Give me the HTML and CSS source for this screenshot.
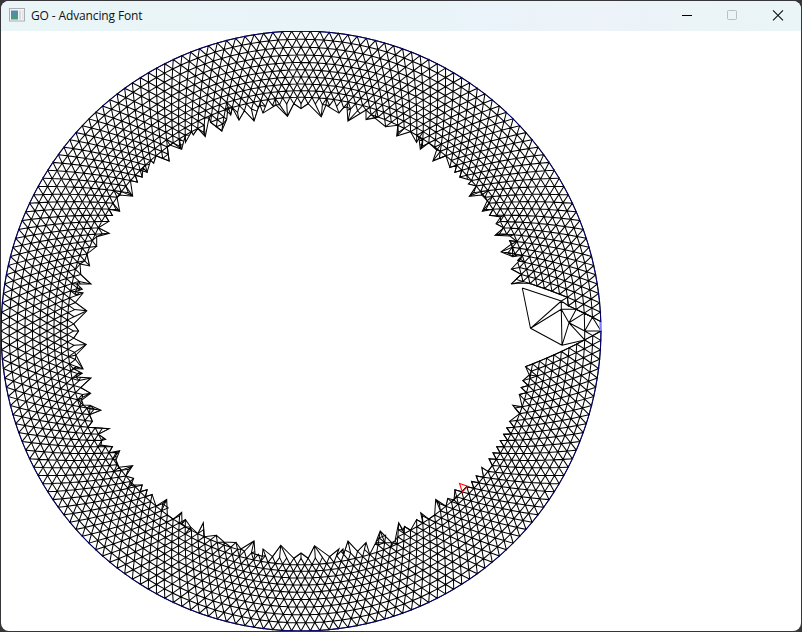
FILE: index.html
```
<!DOCTYPE html>
<html lang="en">
<head>
<meta charset="utf-8">
<title>GO - Advancing Font</title>
<link rel="stylesheet" href="styles.css">
</head>
<body>
<div class="window">
  <header class="titlebar">
    <svg class="app-icon" width="16" height="14" viewBox="0 0 16 14">
      <defs><linearGradient id="pane" x1="0" y1="0" x2="0" y2="1"><stop offset="0" stop-color="#5689b5"/><stop offset="1" stop-color="#4b9a7c"/></linearGradient></defs>
      <rect x=".5" y=".5" width="15" height="12.5" fill="#f3f5f6" stroke="#a9afb3"/>
      <rect x="2" y="2.5" width="7" height="9" fill="url(#pane)"/>
      <rect x="10" y="2.5" width="2" height="9" fill="#d5dadd"/>
      <rect x="13" y="2.5" width="1.5" height="9" fill="#dfe3e6"/>
    </svg>
    <h1 class="title">GO - Advancing Font</h1>
    <div class="controls">
      <svg class="control" width="46" height="29" viewBox="0 0 46 29"><path d="M18 14.5h10" stroke="#000"/></svg>
      <svg class="control" width="46" height="29" viewBox="0 0 46 29"><rect x="17.5" y="9.5" width="9" height="9" rx="1" fill="none" stroke="#b8c0c2"/></svg>
      <svg class="control" width="46" height="29" viewBox="0 0 46 29"><path d="M17 9.3l10 10M27 9.3l-10 10" stroke="#111" stroke-width="1.1"/></svg>
    </div>
  </header>
  <main class="canvas">
    <svg id="mesh" width="800" height="600" viewBox="1 31 800 600">
      <defs><clipPath id="band"><path id="bandShape" clip-rule="evenodd"/></clipPath></defs>
      <path id="rings" class="edge"/>
      <path id="ties" class="edge" clip-path="url(#band)"/>
      <path id="front" class="edge"/>
      <path id="large" class="edge"/>
      <circle class="rim" cx="301" cy="331" r="299.9"/>
      <path class="active" d="M459.5 483.5L467.7 486.3L462.3 492Z"/>
      <path class="open-edge" d="M600.5 322V331"/>
    </svg>
  </main>
</div>
<script src="mesh.js"></script>
</body>
</html>
```
FILE: styles.css
```
* { box-sizing: border-box; }
body {
  margin: 0;
  width: 802px;
  height: 632px;
  overflow: hidden;
  background: #36363a;
  padding: 1px;
  font-family: "Open Sans", "Noto Sans", sans-serif;
}
.window {
  width: 800px;
  height: 630px;
  display: flex;
  flex-direction: column;
  background: #fff;
  border-radius: 8px;
  overflow: hidden;
}
.titlebar {
  height: 30px;
  flex: none;
  display: flex;
  align-items: center;
  padding-left: 8px;
  background: linear-gradient(90deg, #eaf5f7, #e9f4f9 55%, #edf3f9 75%, #e9f5f6);
}
.app-icon { margin-bottom: 2px; }
.title {
  margin: 0 0 1px 6px;
  font-size: 12px;
  font-weight: 400;
  line-height: 28px;
  letter-spacing: -0.13px;
  color: #111;
  white-space: nowrap;
}
.controls { display: flex; margin-left: auto; margin-right: -1px; height: 30px; }
.control { display: block; }
.canvas { flex: 1; }
.canvas svg { display: block; }
.rim { fill: none; stroke: #000078; stroke-width: 0.9; }
.edge { fill: none; stroke: #000; stroke-width: 1.02; }
.active { fill: none; stroke: #f00; stroke-width: 1.1; }
.open-edge { stroke: #8080ff; stroke-width: 2; }
```
FILE: mesh.js
```
const CX = 301, CY = 331, R = 300, N = 200;
const shrink = Math.cos(Math.PI / N) - Math.sqrt(3) * Math.sin(Math.PI / N);

// Vertex of a ring; s counts boundary steps clockwise from the +x axis.
function node(ring, s) {
  const r = R * Math.pow(shrink, ring);
  const a = s * 2 * Math.PI / N;
  return [CX + r * Math.cos(a), CY + r * Math.sin(a)];
}
const fmt = p => p[0].toFixed(2) + ' ' + p[1].toFixed(2);
const seg = (a, b) => 'M' + fmt(a) + 'L' + fmt(b);
const line = pts => 'M' + pts.map(fmt).join('L');
const dist = (a, b) => Math.hypot(a[0] - b[0], a[1] - b[1]);

// The front has advanced fewer rings around the bottom, left and top.
function depth(s) {
  const t = ((s % N) + N) % N;
  return [50, 100, 150].some(c => Math.abs(t - c) < 9) ? 10 : 13;
}

// Inner front, counter-clockwise from the upper side of the seam.
const traced = [
[512.3,282.3],[519,274.5],[511.3,269],[520.7,259.3],[516.7,262.7],[520.7,256.7],[512.7,256.7],[501,252],[511.7,244],[508.7,241],[516.7,240.7],[510,236],
[495,235.3],[501.7,225.7],[496,223.7],[500.7,217],[490,217],[493,211.7],[482.3,211.3],[487.3,200.7],[481.7,195],[469.3,196.3],[474,185],[468.3,184],[470.7,178.3],
[459.3,178.3],[461.7,172.3],[453.7,172.3],[456,165],[449.3,165.7],[446.7,158.3],[435.3,162.3],[436.7,150],[430,145],[420.3,149.3],[419,138],[414.7,141.3],[411,133],
[396.7,136],[396,126],[387.3,126],[375,118],[367.3,120.3],[366,110],[349.7,119],[347,107],[343,107],[337.3,114],[326,105],[320,114.3],[308,105],[301,108.7],[294,105],
[287.7,114],[276,105],[265,114.3],[260,105],[256,107],[252.3,119],[243,110],[239,120.3],[233,110],[232.7,115],[228,107],[226.7,119.3],[222,130.3],[211.3,122.7],[209,118],
[205.3,136.7],[196.7,130],[193.3,135],[190,131],[187.3,141.3],[184,135],[181.7,149.3],[170,145],[165,148.3],[166.7,162],[156.7,158],[153.7,163.3],[149,160],
[147.7,172.3],[143,168],[142.3,178.3],[136,175],[135.3,182.7],[128.3,181.7],[132.7,196.3],[120,195],[117.3,198.3],[119.7,211.3],[110,209],[111.7,217],[103,215],
[106.7,221.7],[100.7,226.7],[107.3,235.3],[96.7,236.7],[96.7,244.7],[89.3,253.3],[90,264.3],[80,264],[82,272],[89.3,282.3],[77,284],[82.3,289.3],[75,291.7],
[84.3,294.3],[76,303],[84.3,311.7],[74,322],[78.7,331],[74,336],[84.3,345],[76,355],[84.3,366.7],[73,368.5],[82.3,373.3],[76,377],[89.3,379.3],[80,388],
[90.7,393.3],[81.7,400],[83.3,405],[90,405.3],[100.7,410],[90.7,417.3],[93,421.7],[89,426.5],[107.7,426.7],[99,436],[105.7,439.3],[100,441],[101,445],[112,444.3],
[107,451.5],[119.7,450.7],[116,460],[119,467.3],[132.7,465.7],[126.3,478.3],[133.7,478.3],[131,485],[142.3,483.7],[140,490.3],[148.3,489.3],[146,498],
[153.3,496.7],[156,504],[166.7,499.3],[165,513.3],[171.7,516.7],[181.7,512.3],[182,523.7],[187.7,520],[190.7,527],[196.7,531.7],[205.3,524.7],[207,537],
[215,535],[224,542],[235,541.7],[241,549],[252.3,542.7],[255,554],[262.3,556.3],[265,547.3],[273,556],[282,547.3],[294,559],[301,553],[308,559],[314.3,547.7],
[329.3,555],[337,547.3],[339,556],[343,549],[346,555],[349.7,542.7],[356,551.7],[363.3,541.7],[369.3,551.7],[375.7,542.7],[380,531.3],[391.7,542.7],[395,541],
[396.7,524.7],[403,530],[407.3,526.7],[411,531],[414.7,520.3],[421,523.3],[420.7,512.7],[430,516.7],[437.3,515],[435.7,499.3],[447.7,505],[447.7,498.3],
[454,500],[453.7,489.3],[462.7,491.7],[467.7,486.3],[474,490],[472.3,482.7],[479,483],[474,476.7],[481.7,476.7],[481.7,467.3],[489.3,469.3],[494,467],
[486.7,459.7],[497,459.3],[492.3,451.7],[501,451.7],[497.3,445.3],[505,445.3],[501,441],[507,440],[501.3,435.3],[510,434.3],[505.7,425.3],[515,425],
[512.3,421.7],[517.3,414],[512.7,405.3],[521.7,405],[519,397],[525,392],[518.7,387.7],[527,383.3],[522.7,379],[529.3,375],[526,368.3]
];

function nearestNode(p) {
  const s = Math.atan2(p[1] - CY, p[0] - CX) * N / (2 * Math.PI);
  let best = null;
  for (let k = 8; k <= 13; k++) {
    const q = node(k, Math.round(s - k / 2) + k / 2);
    if (!best || dist(p, q) < dist(p, best)) best = q;
  }
  return best;
}
// Front points close to a ring vertex share that vertex.
const front = traced.map(p => {
  const q = nearestNode(p);
  return dist(p, q) < 2.9 ? q : p;
}).filter((p, i, a) => i === 0 || dist(p, a[i - 1]) > 0.5);

const lower = [], upper = [node(1, -1.5), node(2, -2), node(3, -2.5), node(4, -3)];
for (let k = 9; k >= 0; k--) lower.push(node(k, k / 2));
for (let k = 4; k <= 9; k++) upper.push(node(k, -(k / 2 + 2)));
upper.push([520, 283]);
const hole = front.concat(lower, [node(0, -1)], upper);

function inHole(x, y) {
  let inside = false;
  for (let i = 0, j = hole.length - 1; i < hole.length; j = i++) {
    const [xi, yi] = hole[i], [xj, yj] = hole[j];
    if ((yi > y) !== (yj > y) && x < (xj - xi) * (y - yi) / (yj - yi) + xi) inside = !inside;
  }
  return inside;
}
// Vertices are tested slightly inward of the triangle so shared ones count.
function keeps(tri) {
  const cx = (tri[0][0] + tri[1][0] + tri[2][0]) / 3;
  const cy = (tri[0][1] + tri[1][1] + tri[2][1]) / 3;
  if (inHole(cx, cy)) return false;
  return tri.every(p => !inHole(p[0] + (cx - p[0]) * 0.3, p[1] + (cy - p[1]) * 0.3));
}

let d = '';
const kept = [];
for (let k = 0; k < 13; k++) {
  for (let i = 0; i < N; i++) {
    const s = i + k / 2;
    if (k >= depth(s + 0.5)) continue;
    const a = node(k, s), b = node(k, s + 1);
    const tris = [[a, b, node(k + 1, s + 0.5)]];
    if (k > 0) tris.push([a, b, node(k - 1, s + 0.5)]);
    for (const t of tris) {
      if (!keeps(t)) continue;
      d += line(t) + 'Z';
      if (k > 7) kept.push(...t);
    }
  }
}
document.getElementById('rings').setAttribute('d', d);

// Remaining front points are tied to the closest distinct mesh vertices.
let ties = '';
for (const p of front) {
  const near = kept.map(q => [dist(p, q), q]).filter(e => e[0] < 15).sort((x, y) => x[0] - y[0]);
  if (!near.length || near[0][0] < 0.5) continue;
  const chosen = [];
  for (const [, q] of near) {
    if (chosen.every(c => dist(c, q) > 1)) chosen.push(q);
    if (chosen.length === 3) break;
  }
  for (const q of chosen) ties += seg(p, q);
}
document.getElementById('ties').setAttribute('d', ties);

document.getElementById('bandShape').setAttribute('d', 'M0 0H802V632H0Z' + line(hole) + 'Z');
document.getElementById('front').setAttribute('d',
  line(front.concat(lower)) + line([node(0, -1)].concat(upper, [front[0]])));

// Oversized triangles that close the seam.
const A = [522.3, 288], B = [530.5, 328.3], C = [561.3, 301], D = [562, 345.3], E = [561.3, 309.3];
const F = [569, 322.8], G = node(3, -2.5), H = [584.7, 331], I = node(2, 1), J = node(2, -2);
const K = node(1, -1.5), L = node(1, 0.5), M = node(0, 0), P = node(4, -4), Q = node(4, -3);
document.getElementById('large').setAttribute('d', [
  [A, B], [A, C], [B, C], [B, E], [B, D], [C, E], [C, Q], [C, P], [E, G], [E, D], [E, F], [F, G],
  [F, D], [F, H], [F, I], [F, J], [D, I], [G, J], [H, J], [H, K], [H, I], [H, L], [H, M], [K, M], [J, K]
].map(e => seg(e[0], e[1])).join(''));
```
